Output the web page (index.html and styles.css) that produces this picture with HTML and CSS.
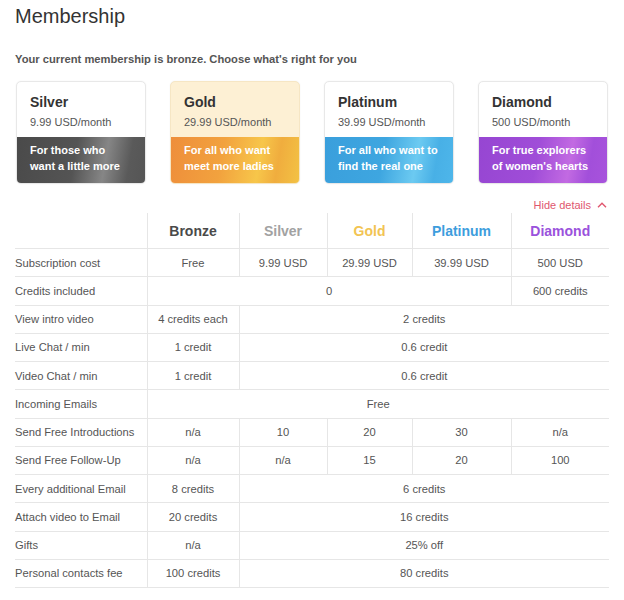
FILE: index.html
```html
<!DOCTYPE html>
<html>
<head>
<meta charset="utf-8">
<link rel="stylesheet" href="styles.css">
</head>
<body>
<div class="page">
  <h1 class="title">Membership</h1>
  <p class="subtitle">Your current membership is bronze. Choose what's right for you</p>
  <div class="cards">
    <div class="card">
      <div class="card-top">
        <div class="card-name">Silver</div>
        <div class="card-price">9.99 USD/month</div>
      </div>
      <div class="card-bottom silver">For those who<br>want a little more</div>
    </div>
    <div class="card card-gold">
      <div class="card-top">
        <div class="card-name">Gold</div>
        <div class="card-price">29.99 USD/month</div>
      </div>
      <div class="card-bottom gold">For all who want<br>meet more ladies</div>
    </div>
    <div class="card">
      <div class="card-top">
        <div class="card-name">Platinum</div>
        <div class="card-price">39.99 USD/month</div>
      </div>
      <div class="card-bottom platinum">For all who want to<br>find the real one</div>
    </div>
    <div class="card">
      <div class="card-top">
        <div class="card-name">Diamond</div>
        <div class="card-price">500 USD/month</div>
      </div>
      <div class="card-bottom diamond">For true explorers<br>of women's hearts</div>
    </div>
  </div>
  <div class="toggle-row">
    <span class="toggle">Hide details
      <svg class="chev" width="10" height="6" viewBox="0 0 10 6"><path d="M1 5.2 L5 1.2 L9 5.2" fill="none" stroke="#e0566e" stroke-width="1.4"/></svg>
    </span>
  </div>
  <table class="plans">
    <colgroup>
      <col class="c-label"><col class="c-bronze"><col class="c-silver"><col class="c-gold"><col class="c-plat"><col class="c-dia">
    </colgroup>
    <thead>
      <tr>
        <th></th>
        <th class="h-bronze">Bronze</th>
        <th class="h-silver">Silver</th>
        <th class="h-gold">Gold</th>
        <th class="h-plat">Platinum</th>
        <th class="h-dia">Diamond</th>
      </tr>
    </thead>
    <tbody>
      <tr><td>Subscription cost</td><td>Free</td><td>9.99 USD</td><td>29.99 USD</td><td>39.99 USD</td><td>500 USD</td></tr>
      <tr><td>Credits included</td><td colspan="4">0</td><td>600 credits</td></tr>
      <tr><td>View intro video</td><td>4 credits each</td><td colspan="4">2 credits</td></tr>
      <tr><td>Live Chat / min</td><td>1 credit</td><td colspan="4">0.6 credit</td></tr>
      <tr><td>Video Chat / min</td><td>1 credit</td><td colspan="4">0.6 credit</td></tr>
      <tr><td>Incoming Emails</td><td colspan="5">Free</td></tr>
      <tr><td>Send Free Introductions</td><td>n/a</td><td>10</td><td>20</td><td>30</td><td>n/a</td></tr>
      <tr><td>Send Free Follow-Up</td><td>n/a</td><td>n/a</td><td>15</td><td>20</td><td>100</td></tr>
      <tr><td>Every additional Email</td><td>8 credits</td><td colspan="4">6 credits</td></tr>
      <tr><td>Attach video to Email</td><td>20 credits</td><td colspan="4">16 credits</td></tr>
      <tr><td>Gifts</td><td>n/a</td><td colspan="4">25% off</td></tr>
      <tr><td>Personal contacts fee</td><td>100 credits</td><td colspan="4">80 credits</td></tr>
    </tbody>
  </table>
</div>
</body>
</html>
```
FILE: styles.css
```css
html, body {
  margin: 0;
  padding: 0;
  background: #ffffff;
}
body {
  font-family: "Liberation Sans", Arial, sans-serif;
  color: #555;
}
.page {
  padding: 4px 15px 10px 15px;
}
.title {
  margin: 0;
  font-size: 20px;
  line-height: 24px;
  font-weight: normal;
  color: #333;
}
.subtitle {
  margin: 24px 0 0 0;
  font-size: 11.2px;
  line-height: 14px;
  font-weight: bold;
  color: #555;
}
.cards {
  display: flex;
  gap: 24px;
  margin: 15px 0 0 1px;
}
.card {
  width: 128px;
  border: 1px solid #e8e8e8;
  border-radius: 5px;
  overflow: hidden;
  background: #fff;
  box-shadow: 0 0 2px rgba(0,0,0,0.06);
}
.card-gold {
  background: #fdf0d4;
  border-color: #f6e6c4;
}
.card-top {
  padding: 11px 13px 7px 13px;
}
.card-name {
  font-size: 14px;
  line-height: 18px;
  font-weight: bold;
  color: #333;
}
.card-price {
  margin-top: 3px;
  font-size: 11px;
  line-height: 16px;
  color: #555;
}
.card-bottom {
  height: 41px;
  padding: 5px 13px 0 13px;
  font-size: 11px;
  line-height: 16px;
  font-weight: bold;
  color: #fff;
}
.silver {
  background: linear-gradient(100deg, #4a4a4a 0%, #545454 45%, #868686 68%, #5a5a5a 86%, #555 100%);
}
.gold {
  background: linear-gradient(100deg, #ee8e3b 0%, #f2a23e 40%, #f7c64a 68%, #f0ad3e 82%, #f3c244 100%);
}
.platinum {
  background: linear-gradient(100deg, #3a9fdc 0%, #3ea6e0 45%, #6ccaf1 70%, #48b0e6 85%, #4eb6ea 100%);
}
.diamond {
  background: linear-gradient(100deg, #9646d2 0%, #a04dd8 45%, #c26ae2 70%, #a24fda 85%, #a853dc 100%);
}
.toggle-row {
  display: flex;
  justify-content: flex-end;
  margin-top: 14px;
  padding-right: 2px;
}
.toggle {
  font-size: 11px;
  line-height: 14px;
  color: #e0566e;
  display: flex;
  align-items: center;
  gap: 6px;
}
.chev {
  display: block;
}
.plans {
  width: 594px;
  border-collapse: collapse;
  table-layout: fixed;
  margin-top: 1px;
  font-size: 11.2px;
  color: #555;
}
.c-label { width: 132px; }
.c-bronze { width: 92px; }
.c-silver { width: 88px; }
.c-gold { width: 85px; }
.c-plat { width: 99px; }
.c-dia { width: 98px; }
.plans th {
  height: 35px;
  padding: 0;
  font-size: 14px;
  font-weight: bold;
  text-align: center;
  border-bottom: 1px solid #e6e6e6;
  border-left: 1px solid #e6e6e6;
}
.plans th:first-child {
  border-left: none;
}
.h-bronze { color: #4a4a4a; }
.h-silver { color: #a2a2a2; }
.h-gold { color: #f2c452; }
.h-plat { color: #3d9ddd; }
.h-dia { color: #9a52dc; }
.plans td {
  height: 27.25px;
  padding: 0;
  text-align: center;
  border-bottom: 1px solid #e6e6e6;
  border-left: 1px solid #e6e6e6;
}
.plans td:first-child {
  text-align: left;
  border-left: none;
}
```
